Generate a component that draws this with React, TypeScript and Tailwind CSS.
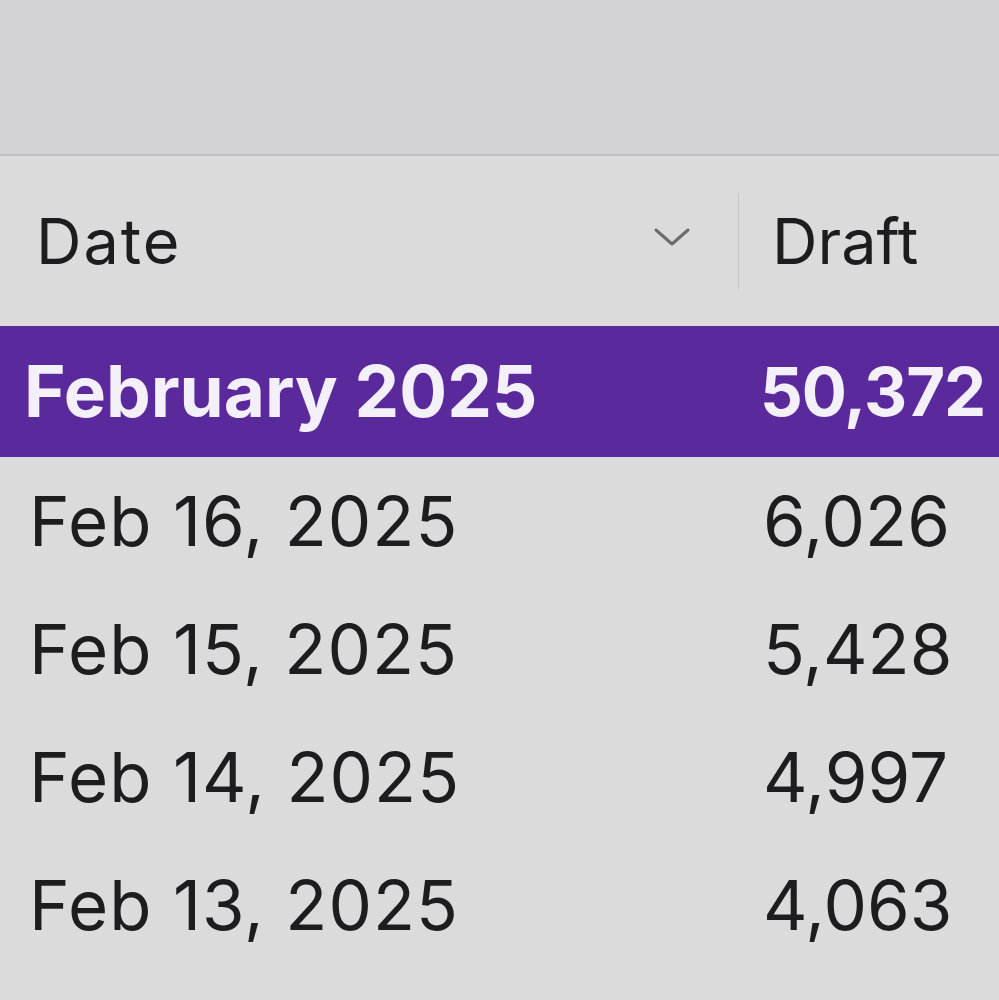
import React from "react";

const rows = [
  { d: "Feb 16, 2025", v: "6,026" },
  { d: "Feb 15, 2025", v: "5,428" },
  { d: "Feb 14, 2025", v: "4,997" },
  { d: "Feb 13, 2025", v: "4,063" },
];

export default function App() {
  return (
    <div
      className="w-[999px] h-[1000px] overflow-hidden bg-[#dbdbdb] flex flex-col text-[#1d1d1f]"
      style={{ fontFamily: 'Inter, "Liberation Sans", Arial, sans-serif' }}
    >
      <div className="h-[156px] shrink-0 bg-[#d3d3d5] border-b-2 border-[#bfbfc1]" />
      <div className="h-[170px] shrink-0 flex items-center">
        <div className="w-[738px] flex items-center justify-between pl-[36px] pr-[46px]">
          <span className="text-[63px] leading-none tracking-[2px]">Date</span>
          <svg width="40" height="24" viewBox="0 0 40 24" className="mt-[-8px]">
            <path d="M4 5 L20 19 L36 5" fill="none" stroke="#6b6b6b" strokeWidth="3" strokeLinecap="round" strokeLinejoin="round" />
          </svg>
        </div>
        <div className="w-px h-[96px] bg-[#c6c6c6]" />
        <span className="pl-[33px] text-[63px] leading-none">Draft</span>
      </div>
      <div className="h-[131px] shrink-0 bg-[#5a2a9c] flex items-center text-[#f4f0fa] font-bold">
        <span className="w-[738px] pl-[24px] text-[71px] leading-none">February 2025</span>
        <span className="pl-[22px] text-[67px] leading-none tracking-[-1px]">50,372</span>
      </div>
      {rows.map((r) => (
        <div key={r.d} className="h-[128px] shrink-0 flex items-center">
          <span className="w-[738px] pl-[29px] text-[69px] leading-none tracking-[1px]">{r.d}</span>
          <span className="pl-[25px] text-[69px] leading-none">{r.v}</span>
        </div>
      ))}
    </div>
  );
}
